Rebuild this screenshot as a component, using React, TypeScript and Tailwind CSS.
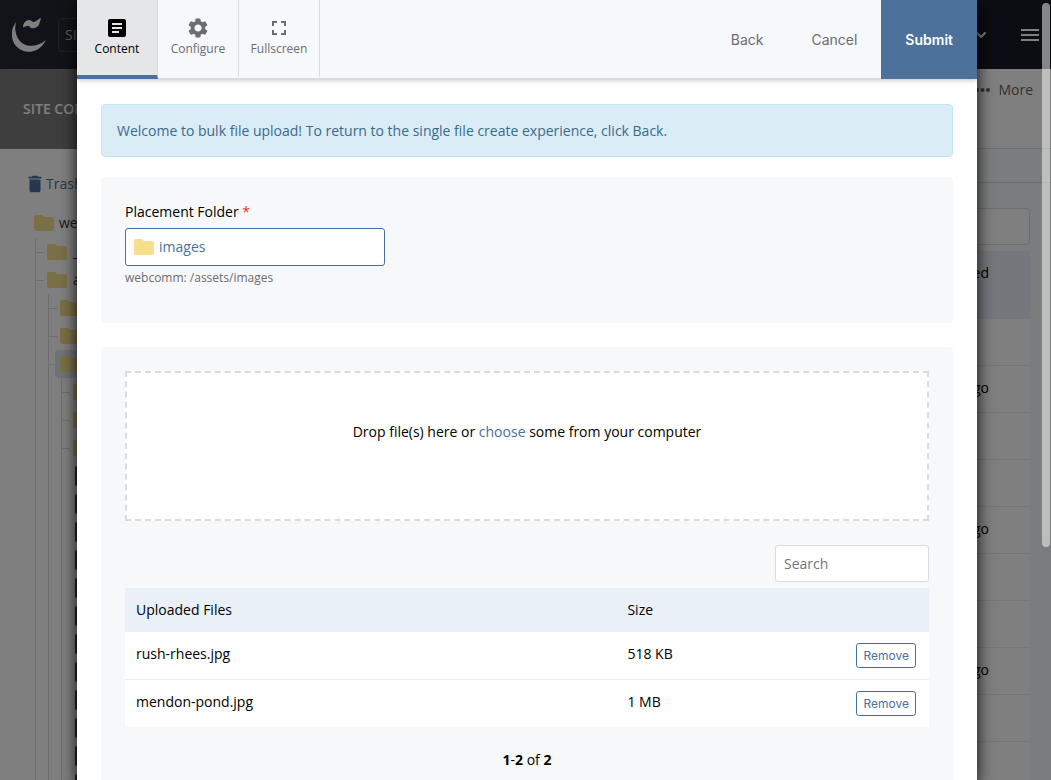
import { MdArticle, MdDelete, MdFolder, MdFullscreen, MdSettings } from 'react-icons/md';
import { ChevronDown } from 'lucide-react';
import { useState } from 'react';
import clsx from 'clsx';

type TreeNode = {
    id: string;
    label?: string;
    file?: boolean;
    selected?: boolean;
    children?: TreeNode[];
};

const subFolders = ['campus', 'events', 'people'].map((id) => ({ id }));
const imageFiles = Array.from({ length: 12 }, (_, i) => ({ id: `photo-${i + 1}`, file: true }));

const tree: TreeNode[] = [
    { id: 'internal', label: '_in' },
    {
        id: 'assets',
        label: 'as',
        children: [
            { id: 'css' },
            { id: 'documents' },
            { id: 'images', selected: true, children: [...subFolders, ...imageFiles] },
        ],
    },
];

const assetRows = ['', 'days ago', '', '', 'days ago', '', '', 'days ago', '', ''];

const tabs = [
    { label: 'Content', icon: <MdArticle className="h-6 w-6" /> },
    { label: 'Configure', icon: <MdSettings className="h-6 w-6" /> },
    { label: 'Fullscreen', icon: <MdFullscreen className="h-6 w-6" /> },
];

function Logo() {
    return (
        <svg viewBox="0 0 34 34" className="h-[34px] w-[34px] shrink-0" fill="white" aria-hidden="true">
            <path d="M4 4C-2 12-1 22 4 28C12 37 27 36 34 22C27 28 17 30 10 25C4 20 2 12 4 4Z" />
            <path d="M11 9.5C11 5 14 2 17 2C19 2 20 4 22 4C24.500 3.500 26 1 29 0C28.500 1.500 28.500 3 27.500 4.500C27.500 8.500 23 11 19 10C18 9.500 18 8 16.500 8C14.500 8 13 8.500 11 9.500Z" />
        </svg>
    );
}

function TreeItem({ node }: { node: TreeNode }) {
    return (
        <li>
            <div className="flex h-7 items-center">
                <span className={clsx('h-px w-1.5 shrink-0', !node.file && 'bg-[#dcdcdc]')} />
                <span
                    className={clsx(
                        'flex h-7 flex-1 items-center rounded-l',
                        node.selected && 'bg-[#dce7f5]'
                    )}
                >
                    <span className={clsx('h-px w-0.5 shrink-0', !node.selected && !node.file && 'bg-[#dcdcdc]')} />
                    {node.file ? (
                        <span className="ml-[5px] h-5 w-4 shrink-0 rounded-xs bg-[#484848]" />
                    ) : (
                        <MdFolder className="ml-px h-6 w-6 shrink-0 text-[#f6df8d]" />
                    )}
                    <span className="ml-1 whitespace-nowrap">{node.label}</span>
                </span>
            </div>
            {node.children && (
                <ul className="ml-3 border-l border-[#dcdcdc]">
                    {node.children.map((child) => (
                        <TreeItem key={child.id} node={child} />
                    ))}
                </ul>
            )}
        </li>
    );
}

function Backdrop() {
    return (
        <div className="flex h-screen flex-col overflow-hidden bg-white text-sm text-[#333]" aria-hidden="true">
            <header className="flex h-[69px] shrink-0 items-center bg-gradient-to-r from-[#242832] to-[#161a24] px-3 text-white">
                <Logo />
                <div className="ml-3 flex h-[34px] w-48 items-center rounded border border-[#344458] px-1.5 text-[#bbb]">SITE</div>
                <ChevronDown className="ml-auto h-4 w-4" strokeWidth={3} />
                <svg viewBox="0 0 18 12" className="ml-8 h-3 w-[18px]" fill="white">
                    <path d="M0 0h18v2H0zM0 5h18v2H0zM0 10h18v2H0z" />
                </svg>
            </header>
            <div className="flex min-h-0 flex-1">
                <aside className="w-72 shrink-0">
                    <h2 className="flex h-20 items-center bg-[#7c7c7c] pl-[23px] font-semibold text-white">SITE CONTENT</h2>
                    <div className="flex items-center pt-[23px] pl-6 text-[#4a709d]">
                        <MdDelete className="h-6 w-[22px]" />
                        <span>Trash</span>
                    </div>
                    <div className="mt-[13px] flex h-7 items-center pl-8">
                        <MdFolder className="h-6 w-6 text-[#f6df8d]" />
                        <span className="ml-[3px]">webcomm</span>
                    </div>
                    <ul className="mt-px ml-[35px] border-l border-[#dcdcdc]">
                        {tree.map((node) => (
                            <TreeItem key={node.id} node={node} />
                        ))}
                    </ul>
                </aside>
                <main className="flex-1 bg-[#f6f8fb]">
                    <div className="flex h-20 items-start justify-end border-b border-[#d6dce4] bg-white pt-[11px] pr-[18px] text-[#666]">
                        <svg viewBox="0 0 16 4" className="mt-2 mr-2 h-1 w-4" fill="currentColor">
                            <circle cx="3" cy="2" r="2" />
                            <circle cx="8.500" cy="2" r="2" />
                            <circle cx="14" cy="2" r="2" />
                        </svg>
                        More
                    </div>
                    <div className="h-[34px] border-b border-[#d6dce4]" />
                    <div className="mt-[25px] mr-[21px] ml-6">
                        <div className="ml-auto h-[37px] w-40 rounded border border-[#d6dce4] bg-white" />
                        <div className="mt-1.5 flex h-[68px] items-start justify-end bg-[#e9f0f8] pt-3 pr-[41px] text-black">Last Modified</div>
                        {assetRows.map((row, i) => (
                            <div key={i} className="flex h-[47px] items-center justify-end border-b border-[#e8ebef] bg-white pr-[41px] pb-0.5 text-black">
                                {row}
                            </div>
                        ))}
                    </div>
                </main>
            </div>
        </div>
    );
}

export default function App() {
    const [activeTab, setActiveTab] = useState('Content');
    const [files, setFiles] = useState([
        { name: 'rush-rhees.jpg', size: '518 KB' },
        { name: 'mendon-pond.jpg', size: '1 MB' },
    ]);

    return (
        <div className="relative h-screen overflow-hidden font-['Open_Sans',sans-serif]">
            <Backdrop />

            {/* Dimmed layer with the dialog */}
            <div className="absolute inset-0 flex justify-center bg-black/50 pl-[3px]">
                <div
                    role="dialog"
                    aria-label="Bulk file upload"
                    className="h-full w-full max-w-[900px] overflow-hidden bg-white text-sm text-black shadow-[0_5px_15px_rgba(0,0,0,0.9)]"
                >
                    <div className="relative flex h-[79px] border-b border-[#d9dce0] bg-[#f7f8fa] shadow-[0_1px_5px_rgba(0,0,0,0.25)]">
                        {tabs.map(({ label, icon }) => (
                            <button
                                key={label}
                                onClick={() => setActiveTab(label)}
                                className={clsx(
                                    'flex h-[79px] w-[81px] flex-col items-center gap-px border-r border-b-4 border-r-[#d8dce2] pt-4 text-xs',
                                    activeTab === label
                                        ? 'border-b-[#4a709d] bg-[#e5e6e8] text-black'
                                        : 'border-b-transparent text-[#6b6d70]'
                                )}
                            >
                                {icon}
                                {label}
                            </button>
                        ))}
                        <div className="ml-auto flex h-[79px] font-['Inter',sans-serif] text-[#6b6d70]">
                            <button className="px-6">Back</button>
                            <button className="px-6">Cancel</button>
                            <button className="bg-[#4c719b] px-6 font-semibold text-white">Submit</button>
                        </div>
                    </div>

                    <div className="p-6 pt-[25px]">
                        <div className="rounded border border-[#bce8f1] bg-[#daecf6] px-[15px] py-4 leading-[19px] text-[#3b6a8e]">
                            Welcome to bulk file upload! To return to the single file create experience, click Back.
                        </div>

                        <section className="mt-5 h-[146px] rounded bg-[#f7f8fa] p-6">
                            <label htmlFor="placement" className="block leading-[22px]">
                                Placement Folder <span className="text-[#ee2c2c]">*</span>
                            </label>
                            <button
                                id="placement"
                                className="mt-[5px] flex h-[38px] w-[260px] items-center rounded-[3px] border border-[#4a709d] bg-white px-1.5 text-[#4a709d]"
                            >
                                <MdFolder className="mr-[3px] h-6 w-6 text-[#f6df8d]" />
                                images
                            </button>
                            <p className="mt-1 text-xs text-[#6b6d70]">webcomm: /assets/images</p>
                        </section>

                        <section className="mt-6 rounded bg-[#f7f8fa] p-6">
                            <div className="flex h-[150px] items-start justify-center border-2 border-dashed border-[#d8dce2] bg-white pt-12">
                                <p className="leading-[22px]">
                                    Drop file(s) here or <a href="#choose" className="text-[#4a709d]">choose</a> some from your computer
                                </p>
                            </div>

                            <div className="mt-6 flex justify-end">
                                <input
                                    type="search"
                                    placeholder="Search"
                                    aria-label="Search"
                                    className="h-[37px] w-[154px] rounded-[3px] border border-[#d8dce2] bg-white px-2 placeholder:text-[#757575]"
                                />
                            </div>

                            <table className="mt-1.5 w-full table-fixed border-separate border-spacing-0 text-left">
                                <thead>
                                    <tr className="h-11 bg-[#e9f0f8]">
                                        <th className="w-[61%] px-[11px] font-normal">Uploaded Files</th>
                                        <th className="px-3 font-normal">Size</th>
                                        <th />
                                    </tr>
                                </thead>
                                <tbody>
                                    {files.map((file) => (
                                        <tr
                                            key={file.name}
                                            className="h-12 bg-white last:h-[47px] [&:not(:last-child)>td]:border-b [&>td]:border-[#eceef1]"
                                        >
                                            <td className="px-[11px] pb-1">{file.name}</td>
                                            <td className="px-3 pb-1">{file.size}</td>
                                            <td className="pr-[13px] text-right">
                                                <button
                                                    onClick={() => setFiles(files.filter((f) => f !== file))}
                                                    className="h-[25px] rounded-[3px] border border-[#4a709d] px-1.5 font-['Inter',sans-serif] text-xs text-[#4a709d]"
                                                >
                                                    Remove
                                                </button>
                                            </td>
                                        </tr>
                                    ))}
                                </tbody>
                            </table>

                            <p className="mt-[23px] text-center">
                                <b>1</b>-<b>{files.length}</b> of <b>{files.length}</b>
                            </p>
                        </section>
                    </div>
                </div>

                {/* Scroll thumb */}
                <div className="absolute top-[3px] right-px h-[544px] w-2 rounded-sm bg-white/50" />
            </div>
        </div>
    );
}
